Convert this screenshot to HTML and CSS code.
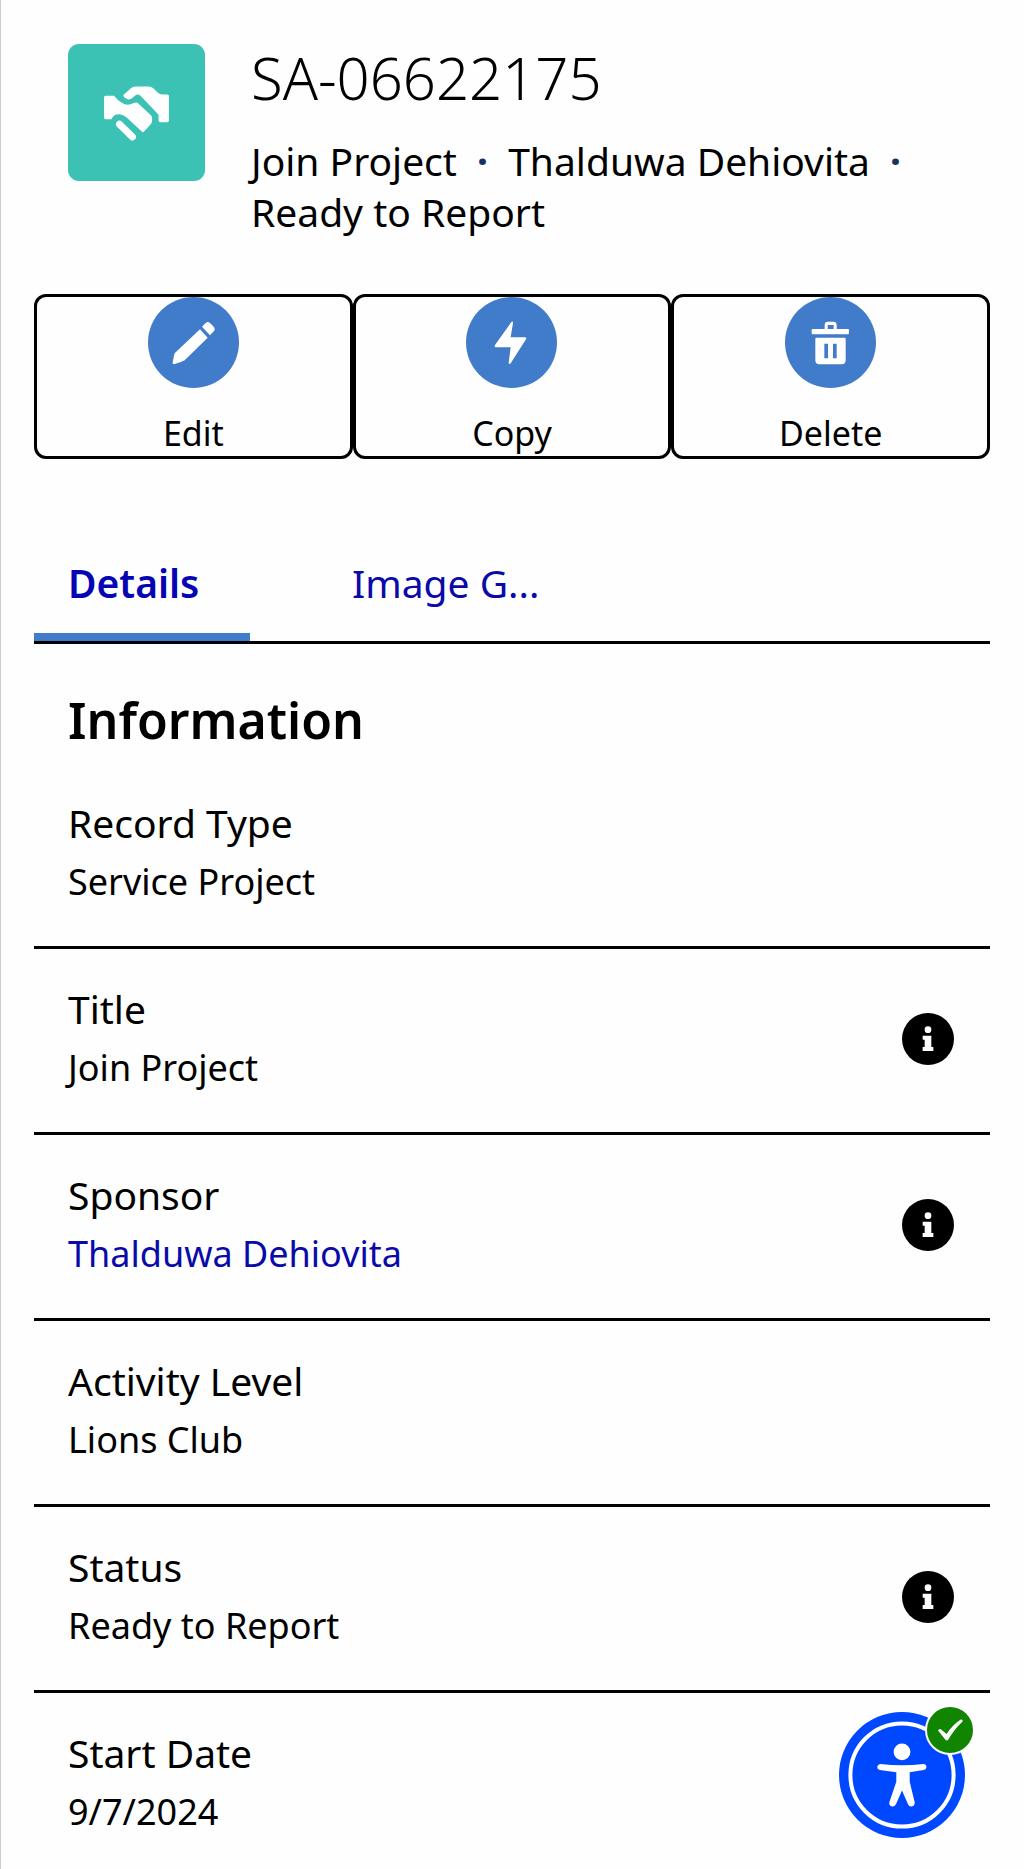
FILE: index.html
```html
<!DOCTYPE html>
<html lang="en">
<head>
    <meta charset="UTF-8">
    <meta name="viewport" content="width=device-width, initial-scale=1.0">
    <title>SA-06622175</title>
    <link rel="stylesheet" href="styles.css">
</head>
<body>
    <main class="record">
        <header class="record-header">
            <svg class="record-icon" viewBox="0 0 410 410" aria-hidden="true">
                <path d="M112 155H138C150 170 164 181 179 182C192 182 200 173 208 176L249 214Q253 219 251 234Q249 240 224 265L178 222Q159 205 142 212Q134 216 130 225H112Q108 225 108 220V160Q108 155 112 155Z"/>
                <path d="M167 151L190 131Q196 127 204 127H243Q249 127 254 132L270 147Q275 151 282 151H298Q302 151 302 156V229Q302 234 297 234H276Q271 234 271 229V212L217 155Q209 148 201 154L194 160Q184 170 174 163Q162 156 167 151Z"/>
                <path class="finger" d="M154 240L193 278"/>
            </svg>
            <div class="record-heading">
                <h1>SA-06622175</h1>
                <p class="record-meta">Join Project <span class="dot">·</span> Thalduwa Dehiovita <span class="dot">·</span> Ready to Report</p>
            </div>
        </header>

        <div class="actions">
            <button type="button" class="action">
                <svg class="action-icon" viewBox="0 0 273 273" aria-hidden="true">
                    <path d="M156 97L179 122L110 190Q106 193 80 201Q73 203 74 196L79 172Q80 169 83 166Z"/>
                    <path d="M162 89L173 78Q179 72 186 78L197 89Q203 96 197 103L186 115Z"/>
                </svg>
                <span>Edit</span>
            </button>
            <button type="button" class="action">
                <svg class="action-icon" viewBox="0 0 273 273" aria-hidden="true">
                    <path d="M136 75Q141 71 141 78L134 121H177Q183 121 180 127L134 199Q128 204 128 197L134 151H90Q84 151 87 144Z"/>
                </svg>
                <span>Copy</span>
            </button>
            <button type="button" class="action">
                <svg class="action-icon" viewBox="0 0 273 273" aria-hidden="true">
                    <path fill-rule="evenodd" d="M83 96H119V84Q119 74 129 74H145Q155 74 155 84V96H189Q192 96 192 99V109Q192 112 189 112H83Q80 112 80 109V99Q80 96 83 96ZM128 96H146V84H128Z"/>
                    <path fill-rule="evenodd" d="M94 122H178Q182 122 182 126V190Q182 202 170 202H103Q91 202 91 190V126Q91 122 94 122ZM118 140V184H129V140ZM144 140V184H155V140Z"/>
                </svg>
                <span>Delete</span>
            </button>
        </div>

        <nav class="tabs">
            <a href="#details" class="tab active">Details</a>
            <a href="#images" class="tab">Image G...</a>
        </nav>

        <section id="details">
            <h2>Information</h2>
            <dl class="fields">
                <div class="field">
                    <div>
                        <dt>Record Type</dt>
                        <dd>Service Project</dd>
                    </div>
                </div>
                <div class="field">
                    <div>
                        <dt>Title</dt>
                        <dd>Join Project</dd>
                    </div>
                    <button type="button" class="info" aria-label="Help for Title">
                        <svg viewBox="0 0 156 156" aria-hidden="true"><circle cx="78" cy="50" r="10"/><path d="M62 68H88V102H94V114H62V102H68V80H62Z"/></svg>
                    </button>
                </div>
                <div class="field">
                    <div>
                        <dt>Sponsor</dt>
                        <dd><a href="#sponsor">Thalduwa Dehiovita</a></dd>
                    </div>
                    <button type="button" class="info" aria-label="Help for Sponsor">
                        <svg viewBox="0 0 156 156" aria-hidden="true"><circle cx="78" cy="50" r="10"/><path d="M62 68H88V102H94V114H62V102H68V80H62Z"/></svg>
                    </button>
                </div>
                <div class="field">
                    <div>
                        <dt>Activity Level</dt>
                        <dd>Lions Club</dd>
                    </div>
                </div>
                <div class="field">
                    <div>
                        <dt>Status</dt>
                        <dd>Ready to Report</dd>
                    </div>
                    <button type="button" class="info" aria-label="Help for Status">
                        <svg viewBox="0 0 156 156" aria-hidden="true"><circle cx="78" cy="50" r="10"/><path d="M62 68H88V102H94V114H62V102H68V80H62Z"/></svg>
                    </button>
                </div>
                <div class="field">
                    <div>
                        <dt>Start Date</dt>
                        <dd>9/7/2024</dd>
                    </div>
                </div>
            </dl>
        </section>
    </main>

    <button type="button" class="accessibility" aria-label="Accessibility options">
        <svg class="person" viewBox="0 0 376 376" aria-hidden="true">
            <circle class="ring" cx="188" cy="188" r="154"/>
            <circle cx="188" cy="119" r="25"/>
            <path d="M123 155Q188 163 252 155Q261 156 261 164Q261 171 253 173L211 180V208L226 270Q226 280 217 282Q209 283 206 275L188 234L170 275Q166 283 158 282Q149 279 150 270L171 208V180L122 173Q114 171 114 164Q115 156 123 155Z"/>
        </svg>
        <svg class="check" viewBox="0 0 150 150" aria-hidden="true">
            <path d="M36 77Q40 69 46 73L64 88Q82 60 110 41Q118 40 116 47Q89 72 69 107Q65 112 60 107Z"/>
        </svg>
    </button>
</body>
</html>
```

FILE: styles.css
```css
* {
    box-sizing: border-box;
}
body {
    margin: 0;
    min-height: 100vh;
    border-left: 1px solid #ccc;
    background: #fefefe;
    color: #000;
    font-family: "Noto Sans", "Open Sans", sans-serif;
    font-size: 39px;
}
h1, h2, p, dl, dd {
    margin: 0;
}
button {
    padding: 0;
    color: inherit;
    font-family: inherit;
    cursor: pointer;
}
a {
    color: #0a0aa8;
    text-decoration: none;
}
.record {
    padding: 38px 34px 0 33px;
}
.record-header {
    display: flex;
    align-items: flex-start;
    gap: 46px;
    padding: 0 34px;
}
.record-icon {
    flex: none;
    width: 137px;
    height: 137px;
    margin-top: 6px;
    border-radius: 11px;
    background: #3cc2b4;
    fill: #fff;
}
.finger {
    stroke: #fff;
    stroke-width: 21;
    stroke-linecap: round;
}
h1 {
    font-size: 58px;
    font-weight: 300;
    line-height: 80px;
}
.record-meta {
    margin-top: 17px;
    line-height: 51px;
}
.dot {
    margin: 0 10px;
    color: #16325c;
    font-weight: 700;
}
.actions {
    display: grid;
    grid-template-columns: repeat(3, 1fr);
    margin-top: 57px;
}
.action {
    display: flex;
    flex-direction: column;
    align-items: center;
    gap: 21px;
    height: 165px;
    border: 3px solid #000;
    border-radius: 12px;
    background: none;
    font-size: 34px;
    line-height: 48px;
}
.action-icon {
    flex: none;
    width: 91px;
    height: 91px;
    border-radius: 50%;
    background: #417ccb;
    fill: #fff;
}
.tabs {
    display: flex;
    gap: 68px;
    margin-top: 96px;
    border-bottom: 3px solid #000;
}
.tab {
    min-width: 216px;
    padding: 0 34px 22px;
    border-bottom: 8px solid transparent;
    line-height: 56px;
}
.tab.active {
    border-color: #417ccb;
    color: #0505b4;
    font-weight: 600;
}
h2 {
    padding: 42px 34px 9px;
    font-size: 50px;
    font-weight: 600;
    line-height: 68px;
}
.field {
    display: flex;
    align-items: center;
    justify-content: space-between;
    padding: 31px 36px 34px 34px;
    border-bottom: 3px solid #000;
}
.field:last-child {
    padding-bottom: 0;
    border-bottom: 0;
}
dt {
    line-height: 58px;
}
dd {
    font-size: 36px;
    line-height: 60px;
}
.info {
    width: 52px;
    height: 52px;
    border: 0;
    border-radius: 50%;
    background: #000;
}
.info svg {
    display: block;
    fill: #fff;
}
.accessibility {
    position: fixed;
    right: 59px;
    bottom: 31px;
    width: 126px;
    height: 126px;
    border: 0;
    border-radius: 50%;
    background: #0048ff;
}
.person {
    display: block;
    fill: #fff;
}
.ring {
    fill: none;
    stroke: #fff;
    stroke-width: 12;
}
.check {
    position: absolute;
    top: -7px;
    right: -10px;
    width: 50px;
    height: 50px;
    border: 2px solid #fff;
    border-radius: 50%;
    background: #118400;
    fill: #fff;
}
```
